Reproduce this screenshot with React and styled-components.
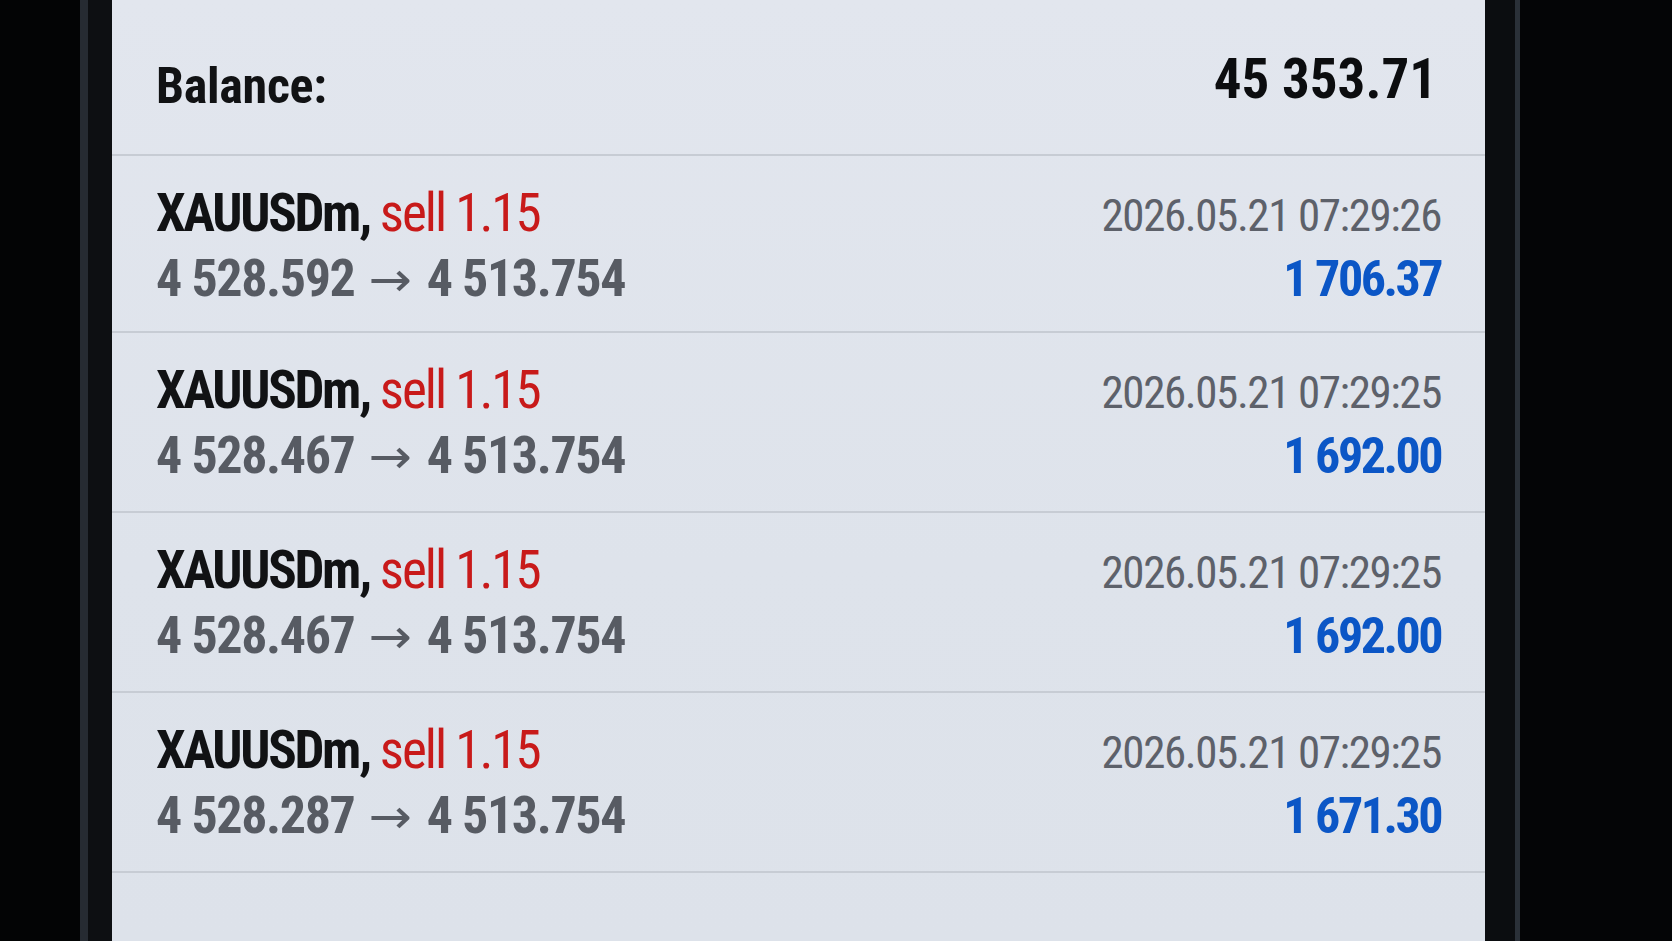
import React from 'react'
import styled, { createGlobalStyle } from 'styled-components'

const trades = [
    { symbol: 'XAUUSDm', side: 'sell', volume: '1.15', open: '4 528.592', close: '4 513.754', time: '2026.05.21 07:29:26', profit: '1 706.37' },
    { symbol: 'XAUUSDm', side: 'sell', volume: '1.15', open: '4 528.467', close: '4 513.754', time: '2026.05.21 07:29:25', profit: '1 692.00' },
    { symbol: 'XAUUSDm', side: 'sell', volume: '1.15', open: '4 528.467', close: '4 513.754', time: '2026.05.21 07:29:25', profit: '1 692.00' },
    { symbol: 'XAUUSDm', side: 'sell', volume: '1.15', open: '4 528.287', close: '4 513.754', time: '2026.05.21 07:29:25', profit: '1 671.30' },
]

function App() {
    return (
        <>
            <Global />
            <Phone>
                <Edge $w={80} $color="#030405" />
                <Edge $w={8} $color="#262b32" />
                <Edge $w={24} $color="#0d0f12" />
                <Screen>
                    <Header>
                        <BalanceLabel>Balance:</BalanceLabel>
                        <BalanceValue>45 353.71</BalanceValue>
                    </Header>
                    {trades.map((t, i) => (
                        <Trade key={i} $h={i === 0 ? 177 : 180}>
                            <Line>
                                <Symbol>
                                    {t.symbol}, <Side>{t.side} {t.volume}</Side>
                                </Symbol>
                                <Time>{t.time}</Time>
                            </Line>
                            <Line>
                                <Prices>
                                    {t.open}<Arrow>→</Arrow>{t.close}
                                </Prices>
                                <Profit>{t.profit}</Profit>
                            </Line>
                        </Trade>
                    ))}
                </Screen>
                <Edge $w={30} $color="#0b0d10" />
                <Edge $w={5} $color="#2a3038" />
                <Edge $w={152} $color="#040506" />
            </Phone>
        </>
    )
}

export default App

const Global = createGlobalStyle`
html, body {
    margin: 0;
    padding: 0;
    background: #030405;
    overflow: hidden;
}
`

const Phone = styled.div`
display: flex;
width: 1672px;
height: 941px;
overflow: hidden;
background: #030405;
font-family: 'Roboto Condensed', 'Roboto', 'DejaVu Sans Condensed', sans-serif;
font-stretch: condensed;
`

const Edge = styled.div`
flex: 0 0 ${p => p.$w}px;
background: ${p => p.$color};
`

const Screen = styled.div`
flex: 0 0 1373px;
display: flex;
flex-direction: column;
background: linear-gradient(180deg, #e2e6ee 0%, #dee3eb 60%, #dde2ea 100%);
`

const Header = styled.div`
height: 154px;
flex: 0 0 auto;
display: flex;
justify-content: space-between;
align-items: flex-start;
padding: 0 48px 0 44px;
border-bottom: 2px solid #c7ccd4;
`

const BalanceLabel = styled.div`
margin-top: 56px;
font-size: 50px;
line-height: 60px;
font-weight: 700;
letter-spacing: -0.3px;
color: #111214;
`

const BalanceValue = styled.div`
margin-top: 49px;
font-size: 55px;
line-height: 60px;
font-weight: 700;
color: #0c0d0f;
`

const Trade = styled.div`
height: ${p => p.$h}px;
flex: 0 0 auto;
box-sizing: border-box;
padding: 24px 44px 0 44px;
border-bottom: 2px solid #c7ccd4;
display: flex;
flex-direction: column;
`

const Line = styled.div`
display: flex;
justify-content: space-between;
align-items: baseline;
height: 66px;
line-height: 66px;
`

const Symbol = styled.div`
font-size: 53px;
font-weight: 700;
letter-spacing: -2.3px;
color: #111214;
`

const Side = styled.span`
font-weight: 400;
letter-spacing: -2px;
color: #c81a1a;
`

const Prices = styled.div`
font-size: 52px;
font-weight: 700;
letter-spacing: -1.4px;
color: #575b63;
`

const Arrow = styled.span`
display: inline-block;
margin: 0 18px;
font-size: 48px;
font-weight: 400;
letter-spacing: 0;
transform: scaleX(1.2);
`

const Time = styled.div`
font-size: 45px;
font-weight: 400;
letter-spacing: -1.4px;
color: #5d616a;
`

const Profit = styled.div`
font-size: 50px;
font-weight: 700;
letter-spacing: -2.5px;
color: #0b56c6;
`
